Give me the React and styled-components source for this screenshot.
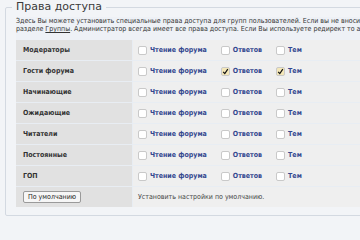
import React from 'react';
import styled, { createGlobalStyle } from 'styled-components';

const GlobalStyle = createGlobalStyle`
  html, body {
    margin: 0;
    padding: 0;
    background: #f2f4f7;
    overflow: hidden;
  }
  body {
    font-family: 'DejaVu Sans', Verdana, sans-serif;
    color: #333;
  }
`;

const narrow = `'DejaVu Sans Condensed', 'DejaVu Sans', Verdana, sans-serif`;

const Page = styled.div`
  width: 460px;
  padding: 0 0 0 5px;
`;

const Fieldset = styled.fieldset`
  margin: 0;
  padding: 0 10px 8px 10px;
  border: 1px solid #d3d9e1;
  border-radius: 2px;
  min-width: 0;
`;

const Legend = styled.legend`
  font-size: 11px;
  line-height: 14px;
  color: #3a3a3a;
  padding: 0 4px;
  margin-left: -4px;
`;

const Intro = styled.p`
  margin: 3px 0 0;
  padding: 0 0 7px;
  font-family: ${narrow};
  font-size: 7px;
  line-height: 8px;
  color: #333;
  white-space: nowrap;
  background: #eef1f6;

  a {
    color: #333;
    text-decoration: underline;
  }
`;

const Table = styled.div`
  display: flex;
  flex-direction: column;
  gap: 1px;
  background: #e8edf3;
`;

const Row = styled.div`
  display: grid;
  grid-template-columns: 116px 1fr;
  column-gap: 1px;
  height: 20px;
`;

const LabelCell = styled.div`
  display: flex;
  align-items: center;
  padding-left: 7px;
  background: #e1e1e1;
  font-family: ${narrow};
  font-size: 7px;
  font-weight: bold;
  color: #333;
`;

const ValueCell = styled.div`
  display: flex;
  align-items: center;
  gap: 14px;
  padding-left: 5px;
  background: #efefef;
  font-family: ${narrow};
  font-size: 7px;
  color: #444;
`;

const Option = styled.label`
  display: inline-flex;
  align-items: center;
  gap: 3px;
  font-weight: bold;
  color: #34488f;
`;

const Box = styled.span`
  display: inline-flex;
  align-items: center;
  justify-content: center;
  box-sizing: border-box;
  width: 9px;
  height: 9px;
  border: 1px solid #c9c9c9;
  border-radius: 2px;
  background: ${({ $checked }) => ($checked ? '#f4e7b8' : '#fff')};
`;

const Button = styled.button`
  font-family: ${narrow};
  font-size: 7px;
  line-height: 9px;
  padding: 0 4px;
  height: 12px;
  color: #222;
  background: #f6f6f6;
  border: 1px solid #9a9a9a;
  border-radius: 2px;
`;

const Check = () => (
  <svg width="7" height="7" viewBox="0 0 7 7">
    <path d="M1.2 3.8 L2.8 5.6 L5.8 1.2" fill="none" stroke="#111" strokeWidth="1.2" />
  </svg>
);

const CheckOption = ({ checked, children }) => (
  <Option>
    <Box $checked={checked}>{checked && <Check />}</Box>
    {children}
  </Option>
);

const groups = [
  { name: 'Модераторы', read: false, reply: false, topic: false },
  { name: 'Гости форума', read: false, reply: true, topic: true },
  { name: 'Начинающие', read: false, reply: false, topic: false },
  { name: 'Ожидающие', read: false, reply: false, topic: false },
  { name: 'Читатели', read: false, reply: false, topic: false },
  { name: 'Постоянные', read: false, reply: false, topic: false },
  { name: 'ГОП', read: false, reply: false, topic: false },
];

const App = () => (
  <Page>
    <GlobalStyle />
    <Fieldset>
      <Legend>Права доступа</Legend>
      <Intro>
        Здесь Вы можете установить специальные права доступа для групп пользователей. Если вы не вносите изменения,
        <br />
        разделе <a href="#groups">Группы</a>. Администратор всегда имеет все права доступа. Если Вы используете редирект то а
      </Intro>
      <Table>
        {groups.map((g) => (
          <Row key={g.name}>
            <LabelCell>{g.name}</LabelCell>
            <ValueCell>
              <CheckOption checked={g.read}>Чтение форума</CheckOption>
              <CheckOption checked={g.reply}>Ответов</CheckOption>
              <CheckOption checked={g.topic}>Тем</CheckOption>
            </ValueCell>
          </Row>
        ))}
        <Row>
          <LabelCell>
            <Button type="button">По умолчанию</Button>
          </LabelCell>
          <ValueCell>Установить настройки по умолчанию.</ValueCell>
        </Row>
      </Table>
    </Fieldset>
  </Page>
);

export default App;
